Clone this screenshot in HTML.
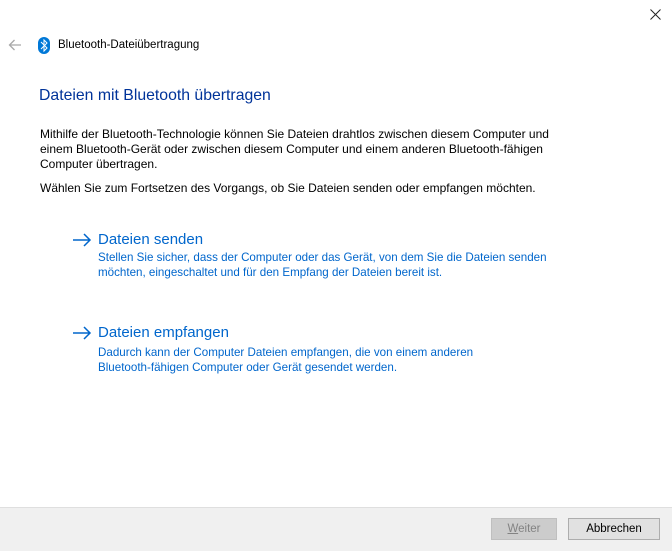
<!DOCTYPE html>
<html><head><meta charset="utf-8"><style>
body{margin:0;width:672px;height:550px;background:#fff;font-family:"Liberation Sans",sans-serif;position:relative;overflow:hidden;color:#000}
.a{position:absolute;white-space:nowrap}
p{margin:0}
.t{font-size:12px;line-height:15px}
.lk{color:#0066cc;font-size:11.6px}
.lt{font-size:15px;color:#0066cc}
.btn{position:absolute;top:518px;height:20px;border:1px solid #adadad;background:#e1e1e1;font-size:11.5px;text-align:center;line-height:20px;box-sizing:content-box}
</style></head><body>
<svg class="a" style="left:650px;top:9px" width="11" height="11" viewBox="0 0 11 11"><path d="M0.5 0.5l10 10M10.5 0.5l-10 10" stroke="#222" stroke-width="1"/></svg>
<svg class="a" style="left:8px;top:39px" width="14" height="12" viewBox="0 0 14 12"><path d="M13 6H1.5M6.5 1L1.5 6l5 5" stroke="#a8a8a8" stroke-width="1.3" fill="none"/></svg>
<svg class="a" style="left:38px;top:37px" width="12" height="17" viewBox="0 0 12 17"><rect x="0" y="0" width="12" height="17" rx="6" fill="#0078d7"/><path d="M3 5l6 6-3 3V3l3 3-6 6" stroke="#fff" stroke-width="1" fill="none"/></svg>
<div class="a" style="left:58px;top:39px;font-size:11.5px">Bluetooth-Dateiübertragung</div>
<div class="a" style="left:39px;top:87px;font-size:15.8px;color:#003399">Dateien mit Bluetooth übertragen</div>
<div class="a t" style="left:40px;top:127px">Mithilfe der Bluetooth-Technologie können Sie Dateien drahtlos zwischen diesem Computer und<br>einem Bluetooth-Gerät oder zwischen diesem Computer und einem anderen Bluetooth-fähigen<br>Computer übertragen.</div>
<div class="a t" style="left:40px;top:181px">Wählen Sie zum Fortsetzen des Vorgangs, ob Sie Dateien senden oder empfangen möchten.</div>
<svg class="a" style="left:72px;top:233px" width="20" height="14" viewBox="0 0 20 14"><path d="M1 7h17M12 1l6 6-6 6" stroke="#0066cc" stroke-width="1.5" fill="none"/></svg>
<div class="a lt" style="left:98px;top:231px">Dateien senden</div>
<div class="a t lk" style="left:98px;top:250px">Stellen Sie sicher, dass der Computer oder das Gerät, von dem Sie die Dateien senden<br>möchten, eingeschaltet und für den Empfang der Dateien bereit ist.</div>
<svg class="a" style="left:72px;top:326px" width="20" height="14" viewBox="0 0 20 14"><path d="M1 7h17M12 1l6 6-6 6" stroke="#0066cc" stroke-width="1.5" fill="none"/></svg>
<div class="a lt" style="left:98px;top:324px">Dateien empfangen</div>
<div class="a t lk" style="left:98px;top:345px">Dadurch kann der Computer Dateien empfangen, die von einem anderen<br>Bluetooth-fähigen Computer oder Gerät gesendet werden.</div>
<div class="a" style="left:0;top:507px;width:672px;height:43px;background:#f0f0f0;border-top:1px solid #dfdfdf"></div>
<div class="btn" style="left:491px;width:64px;background:#cccccc;border-color:#bfbfbf;color:#838383"><u>W</u>eiter</div>
<div class="btn" style="left:568px;width:90px">Abbrechen</div>
</body></html>
